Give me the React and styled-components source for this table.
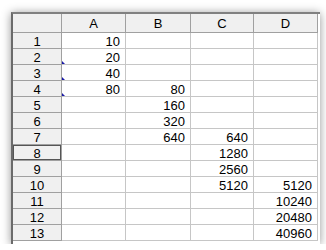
import React from 'react';
import styled, { createGlobalStyle } from 'styled-components';

const GlobalStyle = createGlobalStyle`
  body {
    margin: 0;
    background: #ffffff;
    font-family: "Liberation Sans", Arial, sans-serif;
  }
`;

const Page = styled.div`
  padding: 12px 0 0 11px;
`;

const Sheet = styled.div`
  display: inline-block;
  background: #ffffff;
  border-left: 2px solid #6b6b6b;
  border-top: 2px solid #808080;
  padding: 0 2px 3px 0;
  box-shadow: 0 1px 9px rgba(0, 0, 0, 0.42);
`;

const Grid = styled.div`
  display: grid;
  grid-template-columns: 49px 64px 65px 63px 64px;
  grid-template-rows: 19px repeat(13, 16px);
  font-size: 13px;
  color: #000000;
`;

const HeadCell = styled.div`
  display: flex;
  align-items: center;
  justify-content: center;
  background: #f0f0f0;
  border-right: 1px solid #a0a0a0;
  border-bottom: 1px solid #a0a0a0;
  box-sizing: border-box;
  line-height: 1;
  padding-top: 1px;
  box-shadow: ${p => (p.$active ? 'inset 0 0 0 1px #555555' : 'none')};
`;

const Cell = styled.div`
  position: relative;
  display: flex;
  align-items: center;
  justify-content: flex-end;
  padding: 1px 5px 0 0;
  border-right: 1px solid #c6c6c6;
  border-bottom: 1px solid #c6c6c6;
  box-sizing: border-box;
  line-height: 1;
`;

const Marker = styled.span`
  position: absolute;
  left: 0;
  bottom: 0;
  width: 0;
  height: 0;
  border-left: 3px solid #1a1aa8;
  border-top: 3px solid transparent;
`;

const columns = ['A', 'B', 'C', 'D'];

const values = {
  1: { A: 10 },
  2: { A: 20 },
  3: { A: 40 },
  4: { A: 80, B: 80 },
  5: { B: 160 },
  6: { B: 320 },
  7: { B: 640, C: 640 },
  8: { C: 1280 },
  9: { C: 2560 },
  10: { C: 5120, D: 5120 },
  11: { D: 10240 },
  12: { D: 20480 },
  13: { D: 40960 },
};

// cells carrying a comment marker in the bottom-left corner
const marked = { 2: 'A', 3: 'A', 4: 'A' };

export default function App() {
  const rows = Array.from({ length: 13 }, (_, i) => i + 1);
  return (
    <>
      <GlobalStyle />
      <Page>
        <Sheet>
          <Grid>
            <HeadCell />
            {columns.map(c => (
              <HeadCell key={c}>{c}</HeadCell>
            ))}
            {rows.map(r => (
              <React.Fragment key={r}>
                <HeadCell $active={r === 8}>{r}</HeadCell>
                {columns.map(c => (
                  <Cell key={c}>
                    {marked[r] === c && <Marker />}
                    {values[r][c]}
                  </Cell>
                ))}
              </React.Fragment>
            ))}
          </Grid>
        </Sheet>
      </Page>
    </>
  );
}
